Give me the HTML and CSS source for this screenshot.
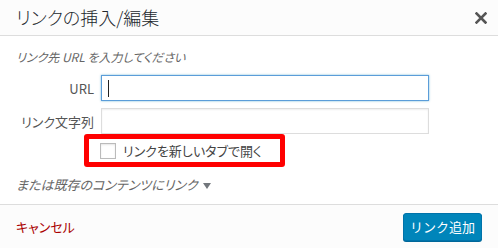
FILE: index.html
```html
<!DOCTYPE html>
<html lang="ja">
<head>
  <meta charset="UTF-8" />
  <meta name="viewport" content="width=device-width, initial-scale=1.0"/>
  <title>リンクの挿入/編集</title>
  <link rel="stylesheet" href="styles.css">
</head>
<body>

  <div class="dialog">
    <div class="dialog-header">
      <h1>リンクの挿入/編集</h1>
      <button class="close" type="button" aria-label="閉じる">
        <svg width="12" height="12" viewBox="0 0 12 12">
          <path d="M1.5 1.5 L10.5 10.5 M10.5 1.5 L1.5 10.5" stroke="#555" stroke-width="2.6" stroke-linecap="square"/>
        </svg>
      </button>
    </div>

    <div class="dialog-body">
      <p class="howto">リンク先 URL を入力してください</p>

      <div class="field-row">
        <label for="url">URL</label>
        <div class="fake-input focused"><span class="caret"></span></div>
      </div>

      <div class="field-row last">
        <label for="link-text">リンク文字列</label>
        <input type="text" id="link-text" class="text-input" />
      </div>

      <div class="highlight-box">
        <label class="check">
          <input type="checkbox" />
          <span class="box"></span>
          リンクを新しいタブで開く
        </label>
      </div>

      <p class="toggle">または既存のコンテンツにリンク <span class="arrow"></span></p>
    </div>

    <div class="dialog-footer">
      <a href="#" class="cancel">キャンセル</a>
      <button class="primary" type="button">リンク追加</button>
    </div>
  </div>

</body>
</html>
```

FILE: styles.css
```css
body {
  margin: 0;
  font-family: "Noto Sans CJK JP", "Noto Sans", sans-serif;
  font-feature-settings: "palt";
  background-color: #fff;
  color: #333;
}

.dialog {
  width: 498px;
  height: 248px;
  display: flex;
  flex-direction: column;
}

.dialog-header {
  height: 35px;
  border-bottom: 1px solid #ddd;
  background-color: #fcfcfc;
  display: flex;
  align-items: center;
  justify-content: space-between;
  padding: 0 11px 0 16px;
}

.dialog-header h1 {
  margin: 0;
  font-size: 18px;
  font-weight: 300;
  color: #23282d;
  line-height: 35px;
}

.close {
  border: none;
  background: none;
  padding: 0;
  width: 12px;
  height: 12px;
  display: flex;
  cursor: pointer;
}

.dialog-body {
  flex: 1;
  padding: 12px 16px 0 16px;
}

.howto {
  margin: 0 0 9px 0;
  font-size: 12px;
  line-height: 18px;
  font-style: italic;
  color: #666;
}

.field-row {
  display: flex;
  align-items: center;
  gap: 7px;
  margin-bottom: 7px;
}

.field-row.last {
  margin-bottom: 0;
}

.field-row label {
  width: 78px;
  text-align: right;
  font-size: 13px;
  color: #555;
}

.text-input,
.fake-input {
  box-sizing: border-box;
  width: 328px;
  height: 26px;
  margin: 0;
  padding: 0 6px;
  border: 1px solid #ddd;
  box-shadow: inset 0 1px 2px rgba(0, 0, 0, 0.07);
  background-color: #fff;
  font-size: 13px;
}

.fake-input {
  display: flex;
  align-items: center;
}

.fake-input.focused {
  border-color: #5b9dd9;
  box-shadow: 0 0 2px rgba(30, 140, 190, 0.6);
}

.caret {
  display: block;
  width: 1px;
  height: 17px;
  background-color: #222;
}

.highlight-box {
  width: 201px;
  box-sizing: border-box;
  height: 33px;
  margin: 0 0 0 68px;
  border: 5px solid #f00;
  border-radius: 3px;
  padding: 0 0 0 11px;
  display: flex;
  align-items: center;
}

.check {
  display: flex;
  align-items: center;
  gap: 7px;
  font-size: 13px;
  color: #444;
}

.check input {
  display: none;
}

.check .box {
  width: 16px;
  height: 16px;
  box-sizing: border-box;
  border: 1px solid #bbb;
  box-shadow: inset 0 1px 2px rgba(0, 0, 0, 0.1);
  background-color: #fff;
}

.toggle {
  margin: 9px 0 0 0;
  font-size: 13px;
  line-height: 18px;
  font-style: italic;
  color: #666;
}

.arrow {
  display: inline-block;
  width: 0;
  height: 0;
  border-left: 4px solid transparent;
  border-right: 4px solid transparent;
  border-top: 6px solid #72777c;
  margin-left: 3px;
  vertical-align: 1px;
}

.dialog-footer {
  height: 43px;
  border-top: 1px solid #ddd;
  background-color: #fcfcfc;
  display: flex;
  align-items: center;
  justify-content: space-between;
  padding: 0 16px 0 16px;
}

.cancel {
  color: #a00;
  text-decoration: none;
  font-size: 13px;
}

.primary {
  height: 28px;
  padding: 0 6px;
  font-family: inherit;
  font-size: 13px;
  color: #fff;
  background-color: #0085ba;
  border: 1px solid #0073aa;
  border-radius: 3px;
  box-shadow: 0 1px 0 #006799;
  cursor: pointer;
}
```
